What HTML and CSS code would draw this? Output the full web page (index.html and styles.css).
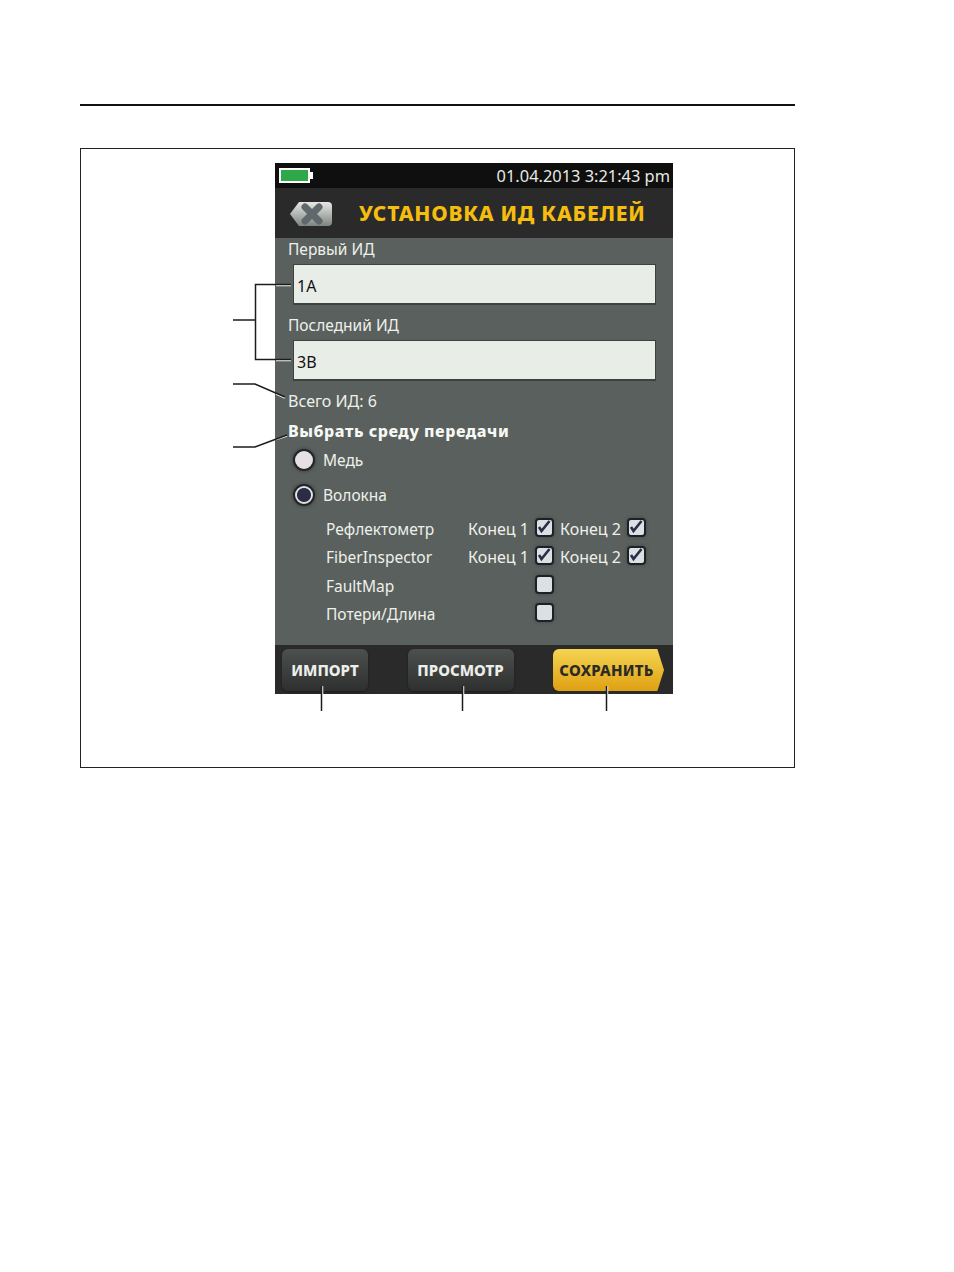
FILE: index.html
```html
<!DOCTYPE html>
<html>
<head>
    <title>Установка ИД кабелей</title>
    <link rel="stylesheet" href="styles.css">
</head>
<body>
    <div class="page-rule"></div>

    <div class="figure">
        <div class="screen">
            <div class="status-bar">
                <svg class="battery" width="35" height="16" viewBox="0 0 35 16">
                    <rect x="1" y="1" width="29" height="13" fill="#2fa84a" stroke="#fff" stroke-width="2"/>
                    <rect x="31" y="4" width="3" height="7" fill="#fff"/>
                </svg>
                <span class="clock">01.04.2013 3:21:43 pm</span>
            </div>

            <div class="title-bar">
                <svg class="back-btn" width="44" height="26" viewBox="0 0 44 26">
                    <defs>
                        <linearGradient id="backFill" x1="0" y1="0" x2="0" y2="1">
                            <stop offset="0" stop-color="#e6e8e4"/>
                            <stop offset="1" stop-color="#7f8581"/>
                        </linearGradient>
                    </defs>
                    <path d="M10 1H39Q43 1 43 5V21Q43 25 39 25H10L1 13Z" fill="url(#backFill)"/>
                    <path d="M16 6L30 20M30 6L16 20" stroke="#5f686c" stroke-width="7" stroke-linecap="round"/>
                </svg>
                <h1 class="title">УСТАНОВКА ИД КАБЕЛЕЙ</h1>
            </div>

            <div class="content">
                <div class="field-label">Первый ИД</div>
                <div class="text-box">1A</div>
                <div class="field-label">Последний ИД</div>
                <div class="text-box">3B</div>
                <div class="total">Всего ИД: 6</div>
                <div class="section-title">Выбрать среду передачи</div>

                <div class="radio-row">
                    <span class="radio"></span>
                    <span>Медь</span>
                </div>
                <div class="radio-row">
                    <span class="radio selected"></span>
                    <span>Волокна</span>
                </div>

                <div class="test-grid">
                    <span class="test-name">Рефлектометр</span>
                    <span>Конец 1</span>
                    <span class="check"><svg viewBox="0 0 15 15"><path d="M2 7L4.500 11L12.500 1"/></svg></span>
                    <span>Конец 2</span>
                    <span class="check"><svg viewBox="0 0 15 15"><path d="M2 7L4.500 11L12.500 1"/></svg></span>

                    <span class="test-name">FiberInspector</span>
                    <span>Конец 1</span>
                    <span class="check"><svg viewBox="0 0 15 15"><path d="M2 7L4.500 11L12.500 1"/></svg></span>
                    <span>Конец 2</span>
                    <span class="check"><svg viewBox="0 0 15 15"><path d="M2 7L4.500 11L12.500 1"/></svg></span>

                    <span class="test-name">FaultMap</span>
                    <span></span>
                    <span class="check"></span>
                    <span></span>
                    <span></span>

                    <span class="test-name">Потери/Длина</span>
                    <span></span>
                    <span class="check"></span>
                    <span></span>
                    <span></span>
                </div>
            </div>

            <div class="bottom-bar">
                <div class="soft-btn import-btn">ИМПОРТ</div>
                <div class="soft-btn view-btn">ПРОСМОТР</div>
                <div class="soft-btn save-btn">СОХРАНИТЬ</div>
            </div>
        </div>

        <!-- callout lines, coordinates are page pixels -->
        <svg class="callouts" viewBox="81 149 713 618">
            <g class="halo">
                <path d="M276 285.500H291M276 360.500H291M276 394L285 398M276 439.500L287 436M322.500 686V694M463.500 686V694M607.500 686V694"/>
            </g>
            <g class="leader">
                <path d="M233 320H255.500M291 284.500H255.500V359.500H291"/>
                <path d="M233 384H255L285 397"/>
                <path d="M233 447H255L287 435"/>
                <path d="M321.500 686V711M462.500 686V711M606.500 686V711"/>
            </g>
        </svg>
    </div>
</body>
</html>
```

FILE: styles.css
```css
body {
    margin: 0;
    background-color: #fff;
    font-family: "Noto Sans", sans-serif;
}
.page-rule {
    width: 715px;
    height: 2px;
    margin: 104px 0 0 80px;
    background-color: #111;
}
.figure {
    position: relative;
    box-sizing: border-box;
    width: 715px;
    height: 620px;
    margin: 42px 0 0 80px;
    padding: 14px 0 0 194px;
    border: 1px solid #222;
}
.callouts {
    position: absolute;
    top: 0;
    left: 0;
    width: 713px;
    height: 618px;
}
.callouts path {
    fill: none;
}
.halo path {
    stroke: #f2f4f0;
    stroke-width: 1.5;
}
.leader path {
    stroke: #1c1c1c;
    stroke-width: 1.5;
}

.screen {
    width: 398px;
    height: 531px;
    display: flex;
    flex-direction: column;
    color: #eef1ea;
    font-size: 16px;
}
.status-bar {
    height: 25px;
    display: flex;
    align-items: center;
    justify-content: space-between;
    padding: 0 3px 0 4px;
    background-color: #0f0f0f;
}
.battery {
    margin-top: 1px;
}
.clock {
    font-size: 16.4px;
    color: #e8e8e4;
}
.title-bar {
    height: 50px;
    display: flex;
    align-items: center;
    padding-left: 14px;
    background-color: #2a2a2a;
}
.back-btn {
    margin-top: 1px;
}
.title {
    margin: 0 0 0 26px;
    font-size: 21px;
    font-weight: 800;
    letter-spacing: 0.75px;
    color: #f5bd0f;
    white-space: nowrap;
}
.content {
    flex: 1;
    padding: 0 17px 0 13px;
    background-color: #5a605d;
}
.field-label {
    height: 26px;
    line-height: 23px;
    font-size: 15.5px;
}
.text-box {
    box-sizing: border-box;
    height: 41px;
    margin: 0 0 9px 5px;
    padding: 0 3px;
    line-height: 42px;
    color: #111;
    background-color: #e9ede7;
    border: 1px solid #3d423f;
    border-bottom-width: 2px;
}
.total {
    height: 30px;
    line-height: 30px;
    margin-top: -4px;
}
.section-title {
    height: 26px;
    line-height: 30px;
    font-size: 16px;
    font-weight: 800;
    letter-spacing: 0.55px;
    color: #f6f8f3;
}
.radio-row {
    display: flex;
    align-items: center;
    height: 35px;
    margin-left: 5px;
    font-size: 15.5px;
}
.radio {
    box-sizing: border-box;
    width: 22px;
    height: 22px;
    margin-right: 8px;
    border: 2px solid #22242a;
    border-radius: 50%;
    background-color: #e6e0e4;
    box-shadow: 0 0 3px 1px #454b47;
}
.radio.selected {
    background-image: radial-gradient(circle, #2b2c45 0 6.5px, #e6e0e4 7.5px);
}
.test-grid {
    display: grid;
    grid-template-columns: 142px 67px 25px 67px 19px;
    grid-auto-rows: 28.33px;
    align-items: center;
    margin: 3px 0 0 38px;
}
.test-name {
    white-space: nowrap;
    font-size: 15.5px;
}
.check {
    box-sizing: border-box;
    width: 19px;
    height: 19px;
    margin-top: -3px;
    border: 2px solid #1f2026;
    border-radius: 4px;
    background-color: #dcdfe4;
    box-shadow: 0 0 3px 1px #4c524f;
}
.check svg {
    display: block;
    width: 15px;
    height: 15px;
    fill: none;
    stroke: #2b2c45;
    stroke-width: 2.6;
}
.bottom-bar {
    height: 49px;
    display: flex;
    align-items: flex-start;
    justify-content: space-between;
    box-sizing: border-box;
    padding: 4px 9px 0 7px;
    background-color: #2a2a2a;
}
.soft-btn {
    height: 42px;
    line-height: 42px;
    text-align: center;
    font-size: 15px;
    font-weight: 800;
    border-radius: 6px;
    color: #eceeea;
    background-image: linear-gradient(#4c504e, #2e302f);
    box-shadow: 0 1px 2px #1a1a1a;
}
.import-btn {
    width: 86px;
}
.view-btn {
    width: 106px;
}
.save-btn {
    width: 111px;
    padding-right: 4px;
    box-sizing: border-box;
    letter-spacing: 0.25px;
    color: #2a2a26;
    background-image: linear-gradient(#f5d452, #dfa012);
    clip-path: polygon(0 0, 94% 0, 100% 50%, 94% 100%, 0 100%);
}
```
